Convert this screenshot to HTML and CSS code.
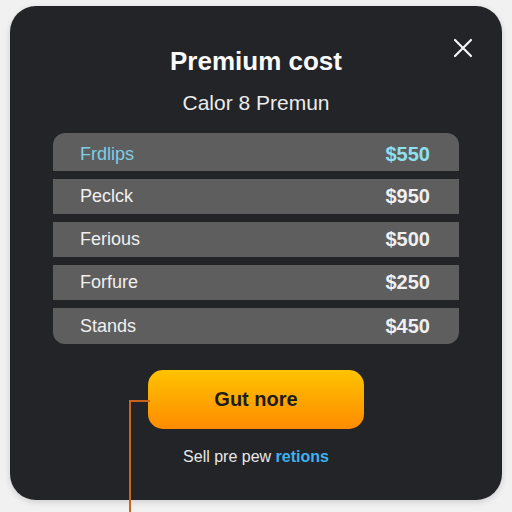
FILE: index.html
```html
<!DOCTYPE html>
<html lang="en">
<head>
  <meta charset="UTF-8" />
  <meta name="viewport" content="width=device-width, initial-scale=1.0"/>
  <title>Premium cost</title>
  <link rel="stylesheet" href="styles.css">
</head>
<body>

<div class="modal">
  <button class="close" aria-label="Close">
    <svg width="20" height="20" viewBox="0 0 20 20">
      <path d="M2 2 L18 18 M18 2 L2 18" stroke="#f4f4f4" stroke-width="2.2" stroke-linecap="round" fill="none"/>
    </svg>
  </button>

  <h1>Premium cost</h1>
  <p class="subtitle">Calor 8 Premun</p>

  <div class="price-list">
    <div class="row active"><span>Frdlips</span><strong>$550</strong></div>
    <div class="row"><span>Peclck</span><strong>$950</strong></div>
    <div class="row"><span>Ferious</span><strong>$500</strong></div>
    <div class="row"><span>Forfure</span><strong>$250</strong></div>
    <div class="row"><span>Stands</span><strong>$450</strong></div>
  </div>

  <div class="cta">
    <button class="buy">Gut nore</button>
    <span class="pointer"></span>
  </div>

  <p class="footer">Sell pre pew <a href="#">retions</a></p>
</div>

</body>
</html>
```

FILE: styles.css
```css
body {
  margin: 0;
  padding: 6px 10px 12px;
  background: #f1f1f1;
  font-family: "Liberation Sans", Arial, sans-serif;
}

.modal {
  position: relative;
  height: 494px;
  box-sizing: border-box;
  background: #222427;
  border-radius: 26px;
  padding: 40px 43px 0;
  text-align: center;
  color: #f2f2f2;
  box-shadow: 0 2px 6px rgba(0, 0, 0, 0.15);
}

.close {
  position: absolute;
  top: 32px;
  right: 29px;
  background: none;
  border: none;
  padding: 0;
  width: 20px;
  height: 20px;
}

h1 {
  margin: 0;
  font-size: 26px;
  line-height: 30px;
  font-weight: 700;
  color: #fafafa;
}

.subtitle {
  margin: 15px 0 0;
  font-size: 21px;
  line-height: 24px;
  color: #ececec;
}

.price-list {
  margin-top: 18px;
  display: flex;
  flex-direction: column;
  gap: 8px;
}

.row {
  display: flex;
  justify-content: space-between;
  align-items: center;
  height: 35px;
  padding: 0 29px 0 27px;
  background: #5e5e5e;
  font-size: 18px;
  color: #f0f0f0;
}

.row strong {
  font-size: 20px;
  font-weight: 700;
}

.row:first-child {
  height: 38px;
  padding-top: 4px;
  box-sizing: border-box;
  border-radius: 12px 12px 0 0;
}

.row:last-child {
  height: 36px;
  border-radius: 0 0 12px 12px;
}

.row.active span {
  color: #7fcfe4;
}

.row.active strong {
  color: #8fe0ef;
}

.cta {
  position: relative;
  margin-top: 26px;
}

.buy {
  width: 216px;
  height: 59px;
  border: none;
  border-radius: 15px;
  background: linear-gradient(#fdc300, #ff8b00);
  font-family: inherit;
  font-size: 20px;
  font-weight: 700;
  color: #1c1c1c;
}

.pointer {
  position: absolute;
  left: 76px;
  top: 30px;
  width: 19px;
  height: 110px;
  border-left: 2px solid #cc631c;
  border-top: 2px solid #cc631c;
}

.footer {
  margin: 18px 0 0;
  font-size: 16px;
  line-height: 20px;
  color: #e8e8e8;
}

.footer a {
  color: #3fb2ef;
  font-weight: 700;
  text-decoration: none;
}
```
